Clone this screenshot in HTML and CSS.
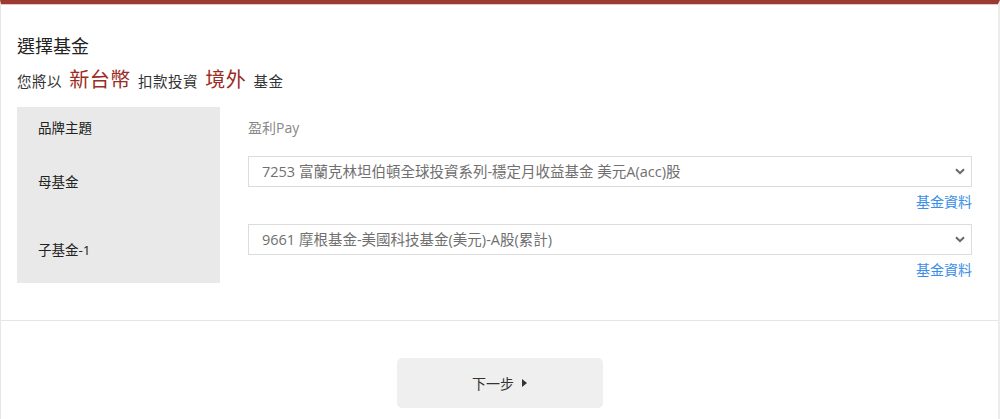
FILE: index.html
```html
<!DOCTYPE html>
<html lang="zh-Hant">
<head>
  <meta charset="UTF-8">
  <meta name="viewport" content="width=device-width, initial-scale=1.0">
  <title>選擇基金</title>
  <link rel="stylesheet" href="styles.css">
</head>
<body>

  <main class="card">
    <section class="fund-section">
      <h1 class="title">選擇基金</h1>
      <p class="subtitle">
        您將以 <span class="highlight">新台幣</span> 扣款投資 <span class="highlight">境外</span> 基金
      </p>

      <div class="fund-form">
        <div class="label">品牌主題</div>
        <div class="field field-text">盈利Pay</div>

        <div class="label">母基金</div>
        <div class="field">
          <div class="select-wrap">
            <select class="select">
              <option>7253 富蘭克林坦伯頓全球投資系列-穩定月收益基金 美元A(acc)股</option>
            </select>
            <svg class="chevron" width="10" height="7" viewBox="0 0 10 7"><path d="M1 1.2l4 4 4-4" fill="none" stroke="#666" stroke-width="2"/></svg>
          </div>
          <a href="#" class="fund-link">基金資料</a>
        </div>

        <div class="label">子基金-1</div>
        <div class="field">
          <div class="select-wrap">
            <select class="select">
              <option>9661 摩根基金-美國科技基金(美元)-A股(累計)</option>
            </select>
            <svg class="chevron" width="10" height="7" viewBox="0 0 10 7"><path d="M1 1.2l4 4 4-4" fill="none" stroke="#666" stroke-width="2"/></svg>
          </div>
          <a href="#" class="fund-link">基金資料</a>
        </div>
      </div>
    </section>

    <footer class="actions">
      <button class="next-btn">
        下一步
        <svg width="5" height="8" viewBox="0 0 5 8"><path d="M0 0l5 4-5 4z" fill="#333"/></svg>
      </button>
    </footer>
  </main>

</body>
</html>
```

FILE: styles.css
```css
body {
  margin: 0;
  font-family: "Open Sans", "Noto Sans CJK TC", sans-serif;
  background: #fff;
  color: #333;
}

.card {
  border-top: 4px solid #9b3a32;
  border-left: 1px solid #e6e6e6;
  border-right: 2px solid #ececec;
  box-shadow: inset 0 1px 0 #eec3bf;
  min-height: 415px;
}

.fund-section {
  padding: 30px 26px 37px 16px;
  border-bottom: 1px solid #e6e6e6;
}

.title {
  margin: 0;
  font-size: 18px;
  line-height: 24px;
  font-weight: 400;
  color: #222;
}

.subtitle {
  margin: 8px 0 0;
  font-size: 14.5px;
  line-height: 28px;
  letter-spacing: 0.5px;
  color: #333;
}

.highlight {
  font-size: 20px;
  color: #9b2c24;
  margin: 0 3px;
}

/* form grid */
.fund-form {
  margin-top: 11px;
  display: grid;
  grid-template-columns: 203px 1fr;
  grid-template-rows: 40px 68px 68px;
  column-gap: 28px;
}

.label {
  background: #e9e9e9;
  display: flex;
  align-items: center;
  padding-left: 21px;
  font-size: 13.5px;
  color: #222;
}

.field {
  display: flex;
  flex-direction: column;
  padding-top: 9px;
}

.field-text {
  padding-top: 0;
  justify-content: center;
  font-size: 14px;
  color: #888;
}

.select-wrap {
  position: relative;
}

.select {
  appearance: none;
  -webkit-appearance: none;
  width: 100%;
  height: 31px;
  padding: 0 30px 0 13px;
  border: 1px solid #dcdcdc;
  border-radius: 0;
  background: #fff;
  font-family: inherit;
  font-size: 14.5px;
  color: #707070;
  outline: none;
}

.chevron {
  position: absolute;
  right: 7px;
  top: 12px;
  pointer-events: none;
}

.fund-link {
  align-self: flex-end;
  margin-top: 6px;
  font-size: 14px;
  line-height: 18px;
  color: #3a8ee6;
  text-decoration: none;
}

.fund-link:hover {
  text-decoration: underline;
}

/* footer */
.actions {
  display: flex;
  justify-content: center;
  padding-top: 37px;
}

.next-btn {
  width: 206px;
  height: 50px;
  border: none;
  border-radius: 5px;
  background: #efefef;
  font-family: inherit;
  font-size: 14px;
  color: #333;
  cursor: pointer;
  display: flex;
  align-items: center;
  justify-content: center;
  gap: 8px;
}

.next-btn:hover {
  background: #e4e4e4;
}
```
